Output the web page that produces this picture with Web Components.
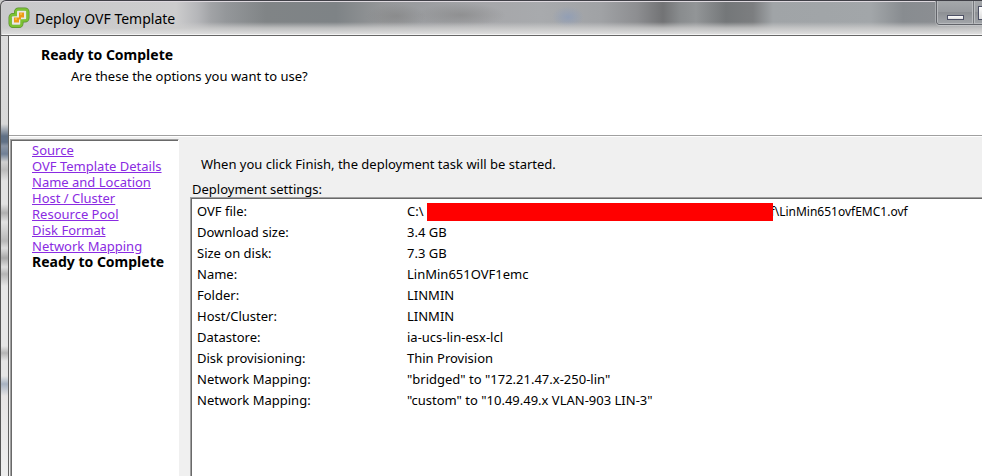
<!DOCTYPE html>
<html lang="en">
<head>
<meta charset="utf-8">
<title>Deploy OVF Template</title>
<style>
html, body { height: 100%; }
body { margin: 0; overflow: hidden; color: #000; font: 13px/16px "Noto Sans", "Open Sans", sans-serif; }
</style>
</head>
<body>
<wizard-window></wizard-window>

<template id="wizard-window">
  <style>
    :host { display: flex; flex-direction: column; box-sizing: border-box; height: 100%; background: #c9c9c9; }
    .frame { flex: 1; min-height: 0; display: flex; flex-direction: column; box-sizing: border-box; padding-left: 7px; border-left: 1px solid #555;
      background: linear-gradient(180deg, #dcdcdc 0, #d8d8d8 88px, #607085 100px, #607085 106px, #8b95a5 110px, #708096 118px, #d0d0d0 126px, #bbb 134px, #e2e2e2 145px, #e2e2e2 168px, #b0b0b0 177px, #e2e2e2 186px, #b8b8b8 205px, #ddd 212px, #a8a8a8 222px, #ddd 231px, #b5b5b5 238px, #e6e6e6 250px, #e6e6e6 310px, #b5b5b5 317px, #e6e6e6 325px, #e6e6e6 340px, #a8b3c2 348px, #e6e4e4 360px, #eee 100%) ; }
    .client { flex: 1; min-height: 0; display: flex; flex-direction: column; border-left: 1px solid #606060; background: #f0f0f0; }
    main { flex: 1; min-height: 0; display: flex; padding: 2px 0 0 1px; }
    section { flex: 1; min-width: 0; display: flex; flex-direction: column; padding-left: 11px; }
    p { margin: 0; padding: 18px 11px 9px; }
    h2 { margin: 0; padding: 0 2px; font: inherit; }
  </style>
  <title-bar>Deploy OVF Template</title-bar>
  <div class="frame">
    <div class="client">
      <page-heading>Ready to Complete<span slot="detail">Are these the options you want to use?</span></page-heading>
      <main>
        <wizard-steps></wizard-steps>
        <section>
          <p>When you click Finish, the deployment task will be started.</p>
          <h2>Deployment settings:</h2>
          <settings-list></settings-list>
        </section>
      </main>
    </div>
  </div>
</template>

<template id="title-bar">
  <style>
    :host { display: flex; align-items: stretch; flex: none; box-sizing: border-box; height: 36px; padding-left: 7px;
      border-top: 1px solid #404047; border-left: 1px solid #555; border-bottom: 1px solid #666; border-top-left-radius: 6px; overflow: hidden;
      box-shadow: inset 0 1px #ddd8de, inset 1px 0 #ccc, inset 0 -1px #f4f4f4;
      background:
        linear-gradient(180deg, transparent 0 21px, #cccccccc 27px, #dedede 33px),
        radial-gradient(ellipse 16px 11px at 567px 16px, #8e9db8cc, transparent),
        radial-gradient(ellipse 30px 12px at 395px 15px, #80808088, transparent),
        radial-gradient(ellipse 45px 12px at 460px 14px, #80808088, transparent),
        linear-gradient(90deg, #c9c9cb 0, #cccccd 175px, #b5b6b9 197px, #a1a3a6 210px, #94979a 225px, #808486 265px, #7e8386 335px, #949698 380px, #9b9da0 420px, #a6a7aa 490px, #a8aaad 540px, #a0a2a5 600px, #8d8e91 636px, #727375 662px, #898c8e 679px, #929597 695px, #747779 725px, #7c7e80 752px, #a0a4a7 772px, #a2a6a9 870px, #888c90 902px, #8b8e92 935px, #a0a2a6 100%); }
    svg { flex: none; margin: 6px 5px 0 0; }
    h1 { flex: 1; margin: 0; padding-top: 8px; font: 14px/20px "Noto Sans", "Open Sans", sans-serif; white-space: nowrap; }
    .controls { display: flex; flex: none; width: 46px; height: 24px; overflow: hidden; box-sizing: border-box; border: 1px solid #62646a; border-width: 0 0 1px 1px; border-bottom-left-radius: 4px; box-shadow: 0 1px #c3c5c7, -1px 0 #aaadb0; }
    button { flex: none; box-sizing: border-box; width: 36px; margin: 0; padding: 0; border: 1px solid #b9bbbe; border-top: 0; background: linear-gradient(#a5a8ab, #989b9f 50%, #8d9094 51%, #a0a3a7); display: flex; align-items: flex-end; justify-content: center; }
    button + button { border-left-color: #74777b; box-shadow: inset 1px 0 #babcbf; justify-content: flex-start; padding-left: 4px; }
    i { box-sizing: border-box; width: 17px; height: 5px; margin-bottom: 3px; border: 1px solid #4c5064; background: linear-gradient(#fff, #ddd); }
    button + button i { height: 14px; }
  </style>
  <svg width="22" height="22" viewBox="0 0 22 22" aria-hidden="true">
    <g fill="none" stroke="#5a9030" stroke-width="4">
      <rect x="8" y="2.500" width="11.500" height="11" rx="2.500"/>
      <rect x="2.500" y="8" width="11" height="11" rx="2.500"/>
    </g>
    <g fill="none" stroke="#7cc233" stroke-width="2.600">
      <rect x="8" y="2.500" width="11.500" height="11" rx="2.500"/>
      <rect x="2.500" y="8" width="11" height="11" rx="2.500"/>
    </g>
    <g fill="#e9e9e4">
      <rect x="9" y="3.800" width="9.200" height="8.500" rx="1"/>
      <rect x="3.900" y="9.200" width="8.400" height="8.600" rx="1"/>
    </g>
    <path d="M11 5.500h5v5h-3v2h-2v3H6v-5h5Z" fill="#ec9a18"/>
    <path d="M7 11.500h2v1H7zM12 6.500h2v1h-2z" fill="#ffd15a"/>
  </svg>
  <h1><slot></slot></h1>
  <div class="controls">
    <button type="button" aria-label="Minimize"><i></i></button>
    <button type="button" aria-label="Maximize"><i></i></button>
  </div>
</template>

<template id="page-heading">
  <style>
    :host { display: block; flex: none; box-sizing: border-box; height: 100px; padding: 9px 32px 0; background: #fff; border-bottom: 1px solid #a0a0a0; box-shadow: 0 1px #fff; }
    h2 { margin: 0; font: 700 14px/20px "Noto Sans", "Open Sans", sans-serif; }
    p { margin: 0; padding: 3px 30px; }
  </style>
  <h2><slot></slot></h2>
  <p><slot name="detail"></slot></p>
</template>

<template id="wizard-steps">
  <style>
    :host { display: block; flex: none; margin-top: 1px; border-style: solid; border-width: 1px 1px 0; border-color: #a0a0a0 #fff #a0a0a0 #a0a0a0; }
    nav { height: 100%; box-sizing: border-box; min-width: 167px; padding: 1px 12px 0 20px; border: 1px solid #696969; border-width: 1px 0 0 1px; background: #fff; }
    ol { list-style: none; margin: 0; padding: 0; }
    a { color: #8a2be2; text-decoration: underline; }
    strong { font-size: 14px; }
    li { height: 16px; white-space: nowrap; }
  </style>
  <nav aria-label="Wizard steps">
    <ol>
      <li><a href="#source">Source</a></li>
      <li><a href="#details">OVF Template Details</a></li>
      <li><a href="#name">Name and Location</a></li>
      <li><a href="#host">Host / Cluster</a></li>
      <li><a href="#pool">Resource Pool</a></li>
      <li><a href="#disk">Disk Format</a></li>
      <li><a href="#network">Network Mapping</a></li>
      <li aria-current="step"><strong>Ready to Complete</strong></li>
    </ol>
  </nav>
</template>

<template id="settings-list">
  <style>
    :host { display: block; flex: 1; min-height: 0; border: 1px solid #a0a0a0; border-width: 1px 0 0 1px; }
    .inner { height: 100%; box-sizing: border-box; padding: 2px 5px; border: 1px solid #696969; border-width: 1px 0 0 1px; background: #fff; }
    table { border-collapse: collapse; width: 100%; }
    th, td { height: 21px; padding: 0; font-weight: 400; text-align: left; white-space: nowrap; line-height: 21px; }
    th { width: 210px; }
    .path { display: flex; align-items: center; }
    .redacted { flex: none; width: 346px; height: 18px; margin-left: 3px; background: #f00; z-index: 1; }
    .tail { margin-left: -2px; font-size: 12px; }
  </style>
  <div class="inner">
    <table>
      <tr><th scope="row">OVF file:</th><td><span class="path">C:\<span class="redacted"></span><span class="tail">f\LinMin651ovfEMC1.ovf</span></span></td></tr>
      <tr><th scope="row">Download size:</th><td>3.4 GB</td></tr>
      <tr><th scope="row">Size on disk:</th><td>7.3 GB</td></tr>
      <tr><th scope="row">Name:</th><td>LinMin651OVF1emc</td></tr>
      <tr><th scope="row">Folder:</th><td>LINMIN</td></tr>
      <tr><th scope="row">Host/Cluster:</th><td>LINMIN</td></tr>
      <tr><th scope="row">Datastore:</th><td>ia-ucs-lin-esx-lcl</td></tr>
      <tr><th scope="row">Disk provisioning:</th><td>Thin Provision</td></tr>
      <tr><th scope="row">Network Mapping:</th><td>"bridged" to "172.21.47.x-250-lin"</td></tr>
      <tr><th scope="row">Network Mapping:</th><td>"custom" to "10.49.49.x VLAN-903 LIN-3"</td></tr>
    </table>
  </div>
</template>

<script>
class TemplateElement extends HTMLElement {
  constructor() {
    super();
    const template = document.getElementById(this.localName);
    this.attachShadow({ mode: 'open' }).append(template.content.cloneNode(true));
  }
}
for (const name of ['title-bar', 'page-heading', 'wizard-steps', 'settings-list', 'wizard-window']) {
  customElements.define(name, class extends TemplateElement {});
}
</script>
</body>
</html>
